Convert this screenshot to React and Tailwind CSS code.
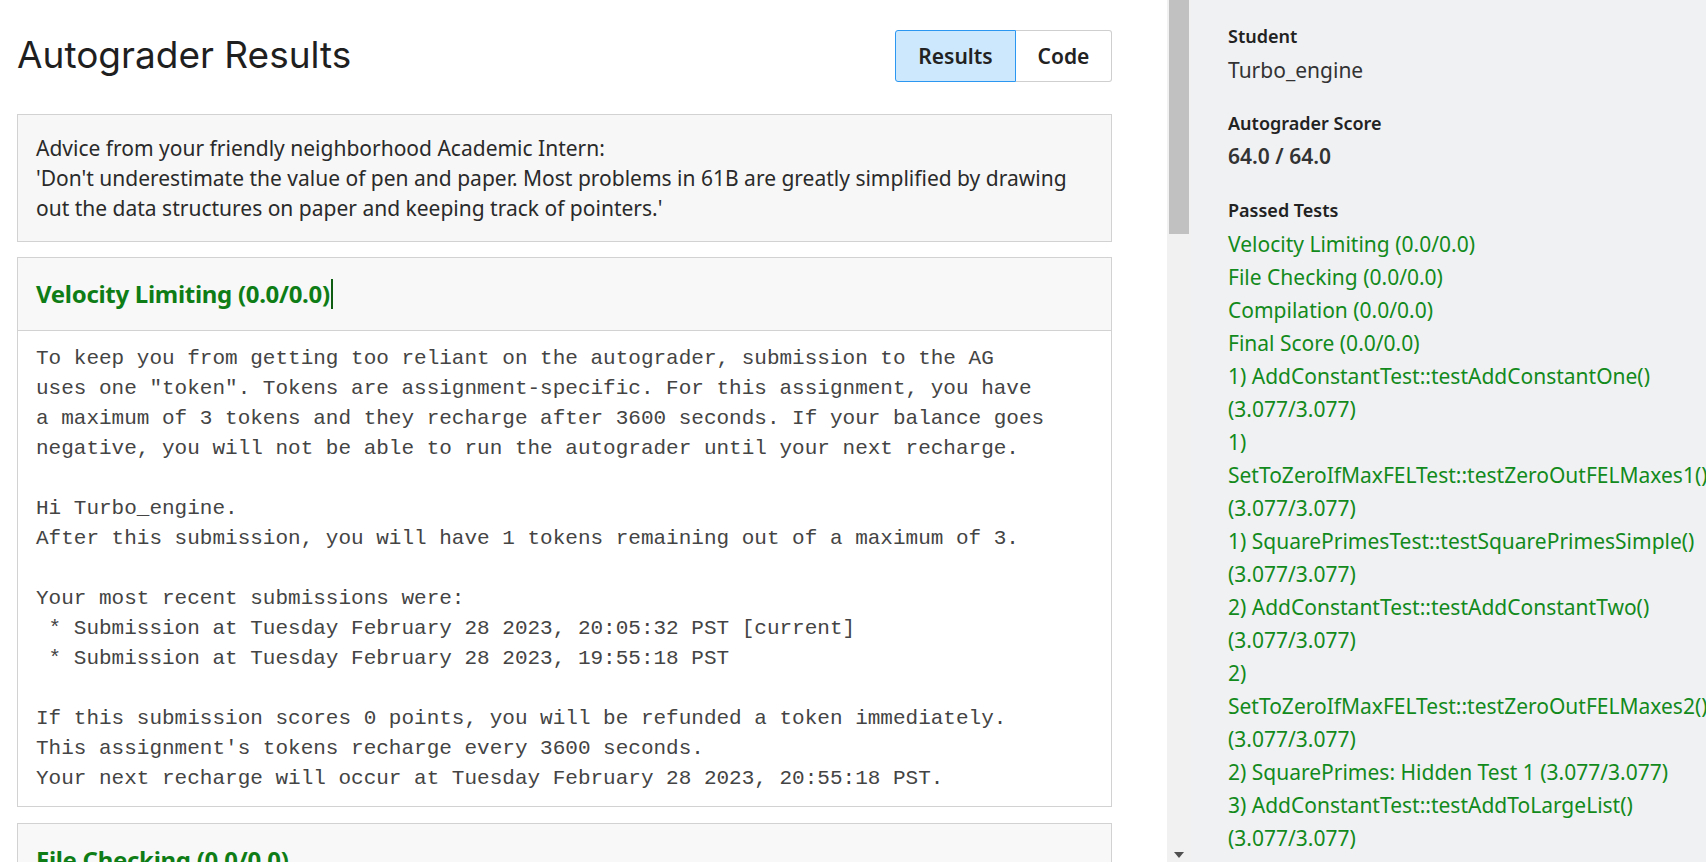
import React from "react";

const monoLines = [
  "To keep you from getting too reliant on the autograder, submission to the AG",
  'uses one "token". Tokens are assignment-specific. For this assignment, you have',
  "a maximum of 3 tokens and they recharge after 3600 seconds. If your balance goes",
  "negative, you will not be able to run the autograder until your next recharge.",
  "",
  "Hi Turbo_engine.",
  "After this submission, you will have 1 tokens remaining out of a maximum of 3.",
  "",
  "Your most recent submissions were:",
  " * Submission at Tuesday February 28 2023, 20:05:32 PST [current]",
  " * Submission at Tuesday February 28 2023, 19:55:18 PST",
  "",
  "If this submission scores 0 points, you will be refunded a token immediately.",
  "This assignment's tokens recharge every 3600 seconds.",
  "Your next recharge will occur at Tuesday February 28 2023, 20:55:18 PST.",
];

const passed = [
  "Velocity Limiting (0.0/0.0)",
  "File Checking (0.0/0.0)",
  "Compilation (0.0/0.0)",
  "Final Score (0.0/0.0)",
  "1) AddConstantTest::testAddConstantOne() (3.077/3.077)",
  "1) SetToZeroIfMaxFELTest::testZeroOutFELMaxes1() (3.077/3.077)",
  "1) SquarePrimesTest::testSquarePrimesSimple() (3.077/3.077)",
  "2) AddConstantTest::testAddConstantTwo() (3.077/3.077)",
  "2) SetToZeroIfMaxFELTest::testZeroOutFELMaxes2() (3.077/3.077)",
  "2) SquarePrimes: Hidden Test 1 (3.077/3.077)",
  "3) AddConstantTest::testAddToLargeList() (3.077/3.077)",
  "3) SetToZeroIfMaxFELTest::testZeroOutFELMaxes3() (3.077/3.077)",
  "3) SquarePrimes: Hidden Test 2 (3.077/3.077)",
];

export default function App() {
  return (
    <div
      className="flex w-[1706px] h-[862px] overflow-hidden bg-white text-[#222]"
      style={{ fontFamily: '"Noto Sans", sans-serif' }}
    >
      {/* Main pane */}
      <div className="w-[1167px] shrink-0 px-[17px] pt-[30px]">
        <div className="w-[1095px]">
          <div className="flex items-center justify-between h-[52px]">
            <h1
              className="text-[37px] font-normal text-[#1f1f1f] -mt-[2px]"
              style={{ fontFamily: 'Inter, sans-serif' }}
            >
              Autograder Results
            </h1>
            <div className="flex h-[52px]">
              <button className="w-[121px] h-[52px] bg-[#cde8fc] border border-[#2b97f0] rounded-l-[3px] text-[21px] font-semibold text-[#222] pt-[2px]">
                Results
              </button>
              <button className="w-[96px] h-[52px] bg-white border border-l-0 border-[#cfcfcf] rounded-r-[3px] text-[21px] font-semibold text-[#222] pt-[2px]">
                Code
              </button>
            </div>
          </div>

          <div className="mt-[32px] border border-[#d2d2d2] bg-[#f7f7f7] px-[18px] py-[18px] text-[21px] leading-[30px] text-[#2a2a2a]">
            <div>Advice from your friendly neighborhood Academic Intern:</div>
            <div>
              'Don't underestimate the value of pen and paper. Most problems in 61B are greatly simplified by drawing out the data structures on paper and keeping track of pointers.'
            </div>
          </div>

          <div className="mt-[15px] border border-[#d2d2d2]">
            <div className="h-[73px] flex items-center px-[18px] bg-[#f8f8f8] border-b border-[#d2d2d2]">
              <span className="text-[24px] font-bold text-[#0f7d16] tracking-[-0.3px]">Velocity Limiting (0.0/0.0)</span>
              <span className="w-[2px] h-[30px] bg-[#0f5d12] ml-[1px]"></span>
            </div>
            <pre
              className="px-[18px] pt-[13px] pb-[12px] text-[21px] leading-[30px] text-[#444] whitespace-pre"
              style={{ fontFamily: '"Liberation Mono", monospace' }}
            >
              {monoLines.join("\n")}
            </pre>
          </div>

          <div className="mt-[16px] border border-[#d2d2d2]">
            <div className="h-[73px] flex items-center px-[18px] bg-[#f8f8f8] border-b border-[#d2d2d2]">
              <span className="text-[24px] font-bold text-[#0f7d16] tracking-[-0.3px]">File Checking (0.0/0.0)</span>
            </div>
          </div>
        </div>
      </div>

      {/* Scrollbar */}
      <div className="w-[24px] shrink-0 bg-[#f1f1f1] flex flex-col justify-between">
        <div className="mx-[2px] h-[234px] bg-[#c1c1c1]"></div>
        <div className="flex justify-center pb-[4px]">
          <svg width="10" height="6" viewBox="0 0 10 6">
            <path d="M0 0 L10 0 L5 6 Z" fill="#505050" />
          </svg>
        </div>
      </div>

      {/* Sidebar */}
      <div className="flex-1 bg-[#f0f1f3] pl-[37px] pt-[23px]">
        <div className="w-[480px]">
          <div className="text-[18px] leading-[26px] font-semibold text-[#222]">Student</div>
          <div className="mt-[5px] text-[21px] leading-[33px] text-[#333]">Turbo_engine</div>

          <div className="mt-[23px] text-[18px] leading-[26px] font-semibold text-[#222]">Autograder Score</div>
          <div className="mt-[4px] text-[21px] leading-[33px] font-semibold text-[#333]">64.0 / 64.0</div>

          <div className="mt-[24px] text-[18px] leading-[26px] font-semibold text-[#222]">Passed Tests</div>
          <div className="mt-[5px] text-[21px] leading-[33px] text-[#138a1c]">
            {passed.map((t) => (
              <div key={t}>{t}</div>
            ))}
          </div>
        </div>
      </div>
    </div>
  );
}
